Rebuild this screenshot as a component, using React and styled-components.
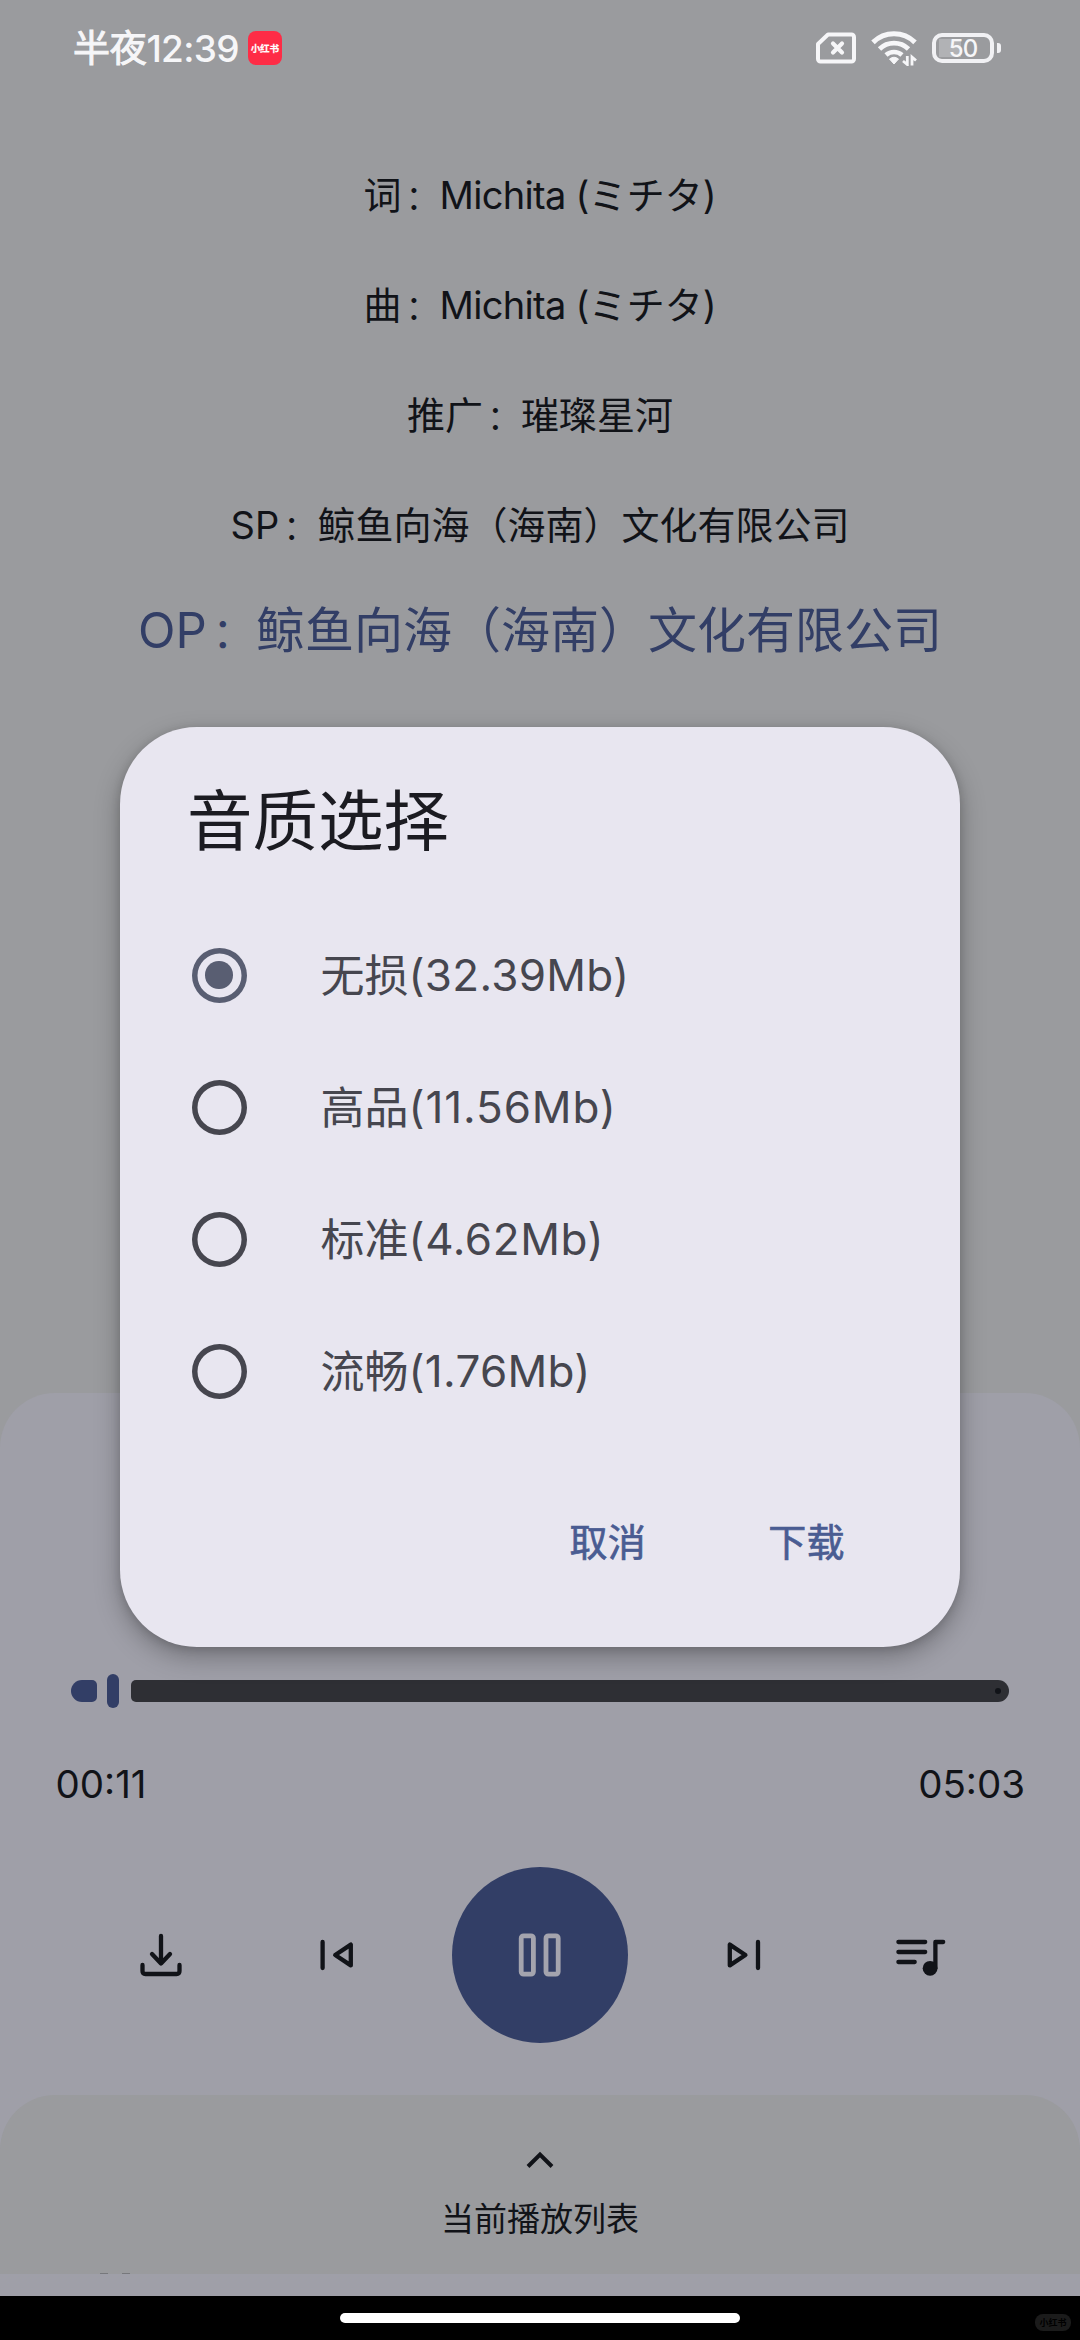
import React, { useState } from 'react';
import styled, { createGlobalStyle } from 'styled-components';

const GlobalStyle = createGlobalStyle`
  * {
    box-sizing: border-box;
  }

  body {
    margin: 0;
    background-color: #9a9b9e;
    font-family: Inter, 'Noto Sans CJK SC', sans-serif;
  }

  button {
    padding: 0;
    border: none;
    background: none;
    font: inherit;
    color: inherit;
    cursor: pointer;
  }

  svg {
    display: block;
  }
`;

const Screen = styled.div`
  position: relative;
  display: flex;
  flex-direction: column;
  width: 1080px;
  height: 2340px;
  overflow: hidden;
  background-color: #9a9b9e;
  color: #111318;
`;

const StatusBar = styled.header`
  display: flex;
  justify-content: space-between;
  height: 96px;
  padding: 0 79px 0 73px;
  color: #f6f6f8;
`;

const StatusGroup = styled.div`
  display: flex;
  align-items: center;
  height: 96px;
  gap: ${(props) => props.$gap}px;
`;

const Clock = styled.span`
  padding-top: 1px;
  font-size: 37px;
  font-weight: ${(props) => props.$weight || 500};
  line-height: 48px;
  letter-spacing: ${(props) => props.$spacing || 0}px;
  -webkit-text-stroke: ${(props) => props.$stroke || 0}px currentColor;
`;

const AppBadge = styled.span`
  display: flex;
  align-items: center;
  justify-content: center;
  width: 34px;
  height: 34px;
  margin-left: 9px;
  border-radius: 8px;
  background-color: #fe2c46;
  color: #fff;
  font-size: 9.6px;
  font-weight: 700;
  letter-spacing: -0.2px;
  -webkit-text-stroke: 0.2px currentColor;
`;

const Battery = styled.div`
  display: flex;
  align-items: center;
  gap: 3px;
`;

const BatteryBody = styled.div`
  display: flex;
  align-items: center;
  justify-content: center;
  width: 62px;
  height: 30px;
  border: 4px solid #f1f1f4;
  border-radius: 10px;
  background: linear-gradient(#b1b2b5, #b1b2b5) 3px 2px / 22px 18px no-repeat;
  font-size: 24px;
  font-weight: 500;
  letter-spacing: -1px;
`;

const BatteryTip = styled.div`
  width: 4px;
  height: 10px;
  border-radius: 0 3px 3px 0;
  background-color: #f1f1f4;
`;

const Lyrics = styled.main`
  display: flex;
  flex-direction: column;
  align-items: center;
  height: 1297px;
  padding-top: 44px;
`;

const LyricLine = styled.p`
  margin: 0;
  height: ${(props) => (props.$active ? 102 : 110)}px;
  line-height: ${(props) => (props.$active ? 102 : 110)}px;
  font-size: ${(props) => (props.$active ? 49 : 38)}px;
  color: ${(props) => (props.$active ? '#323e66' : '#111318')};
  white-space: pre;
`;

const Colon = styled.span`
  margin: 0 0.04em 0 0.13em;
  font-size: 0.86em;
`;

const Latin = styled.span`
  letter-spacing: ${(props) => props.$spacing || 0}px;
`;

const Player = styled.section`
  flex: 1;
  display: flex;
  flex-direction: column;
  border-radius: 55px 55px 0 0;
  background-color: #9f9fa8;
`;

const Seek = styled.div`
  display: flex;
  align-items: center;
  height: 34px;
  margin: 281px 71px 0;
`;

const SeekPlayed = styled.div`
  width: 26px;
  height: 22px;
  border-radius: 11px 5px 5px 11px;
  background-color: #323e66;
`;

const SeekThumb = styled.div`
  width: 12px;
  height: 34px;
  margin: 0 11.5px 0 10px;
  border-radius: 6px;
  background-color: #323e66;
`;

const SeekRest = styled.div`
  flex: 1;
  display: flex;
  align-items: center;
  justify-content: flex-end;
  height: 22px;
  padding-right: 8px;
  border-radius: 5px 11px 11px 5px;
  background-color: #2e2f34;
`;

const SeekEnd = styled.div`
  width: 6px;
  height: 6px;
  border-radius: 50%;
  background-color: #111318;
`;

const Times = styled.div`
  display: flex;
  justify-content: space-between;
  height: 48px;
  margin-top: 52px;
  padding: 0 55px 0 55.5px;
  font-size: 38.5px;
  line-height: 48px;
`;

const Controls = styled.div`
  display: flex;
  align-items: center;
  justify-content: center;
  gap: 82px;
  height: 176px;
  margin-top: 59px;
`;

const ControlPair = styled.div`
  display: flex;
  gap: 110px;
`;

const IconButton = styled.button`
  width: 66px;
  height: 66px;
`;

const PlayButton = styled.button`
  display: flex;
  align-items: center;
  justify-content: center;
  width: 176px;
  height: 176px;
  border-radius: 50%;
  background-color: #323e66;
  color: #a4a4ae;
`;

const Playlist = styled.div`
  display: flex;
  flex-direction: column;
  align-items: center;
  height: 179px;
  margin-top: 52px;
  padding-top: 54px;
  border-radius: 55px 55px 0 0;
  background-color: #9a9b9e;
`;

const PlaylistLabel = styled.span`
  margin-top: 22px;
  font-size: 33px;
  line-height: 48px;
`;

const Peek = styled.div`
  display: flex;
  gap: 14px;
  width: 100%;
  height: 1px;
  margin-top: auto;
  padding-left: 100px;

  span {
    width: 8px;
    background-color: #77787c;
  }
`;

const NavBar = styled.footer`
  display: grid;
  grid-template-columns: 1fr 400px 1fr;
  height: 44px;
  background-color: #000;
`;

const HomePill = styled.div`
  grid-column: 2;
  height: 10px;
  margin-top: 17px;
  border-radius: 5px;
  background-color: #fff;
`;

const Watermark = styled.span`
  justify-self: end;
  width: 36px;
  height: 17px;
  margin: 18px 9px 0 0;
  border-radius: 8px;
  background-color: #1b1b1b;
  color: #000;
  font-size: 9px;
  font-weight: 700;
  line-height: 17px;
  text-align: center;
`;

const Overlay = styled.div`
  position: absolute;
  inset: 34px 0 0;
  display: flex;
  align-items: center;
  justify-content: center;
`;

const Dialog = styled.div`
  width: 840px;
  height: 920px;
  padding: 51px 70px 0 66px;
  border-radius: 77px;
  background-color: #e8e6f0;
  box-shadow: 0 10px 26px rgba(0, 0, 0, 0.28), 0 2px 10px rgba(0, 0, 0, 0.14);
`;

const DialogTitle = styled.h1`
  margin: 0 0 59px 1px;
  font-size: 65.5px;
  font-weight: 400;
  line-height: 88px;
  color: #1b1b21;
`;

const Options = styled.div`
  display: flex;
  flex-direction: column;
`;

const Option = styled.label`
  display: flex;
  align-items: center;
  height: 100px;
  margin-bottom: 32px;
  font-size: 44px;
  color: #46464f;
  cursor: pointer;

  input {
    display: none;
  }
`;

const OptionName = styled.span`
  padding-bottom: 5px;
`;

const Radio = styled.span`
  display: flex;
  align-items: center;
  justify-content: center;
  width: 55px;
  height: 55px;
  margin: 0 74px 0 5.5px;
  border-radius: 50%;
  box-shadow: inset 0 0 0 5.5px ${(props) => (props.$checked ? '#595e72' : '#46464f')};

  &::after {
    content: '';
    width: 27.5px;
    height: 27.5px;
    border-radius: 50%;
    background-color: ${(props) => (props.$checked ? '#595e72' : 'transparent')};
  }
`;

const Actions = styled.div`
  display: flex;
  justify-content: flex-end;
  gap: 122px;
  margin-top: 56px;
  padding-right: 45px;
`;

const ActionButton = styled.button`
  height: 60px;
  color: #4a5c92;
  font-size: 38px;
  letter-spacing: 0.4px;
  -webkit-text-stroke: 0.7px currentColor;
`;

const lyrics = [
  { role: '词', name: 'Michita (', kana: 'ミチタ' },
  { role: '曲', name: 'Michita (', kana: 'ミチタ' },
  { role: '推广', company: '璀璨星河' },
  { role: 'SP', company: '鲸鱼向海（海南）文化有限公司' },
  { role: 'OP', company: '鲸鱼向海（海南）文化有限公司', active: true },
];

const qualities = [
  { name: '无损', size: '(32.39Mb)', spacing: 0.3 },
  { name: '高品', size: '(11.56Mb)', spacing: 0.9 },
  { name: '标准', size: '(4.62Mb)', spacing: 0.6 },
  { name: '流畅', size: '(1.76Mb)', spacing: 0.3 },
];

const NoSimIcon = () => (
  <svg width="40" height="32" viewBox="0 0 40 32" fill="none" stroke="#f6f6f8" strokeLinecap="round" strokeLinejoin="round">
    <path d="M12 2.5H35.5A2.5 2.5 0 0 1 38 5V27A2.5 2.5 0 0 1 35.5 29.5H4.5A2.5 2.5 0 0 1 2 27V12Z" strokeWidth="4" />
    <path d="M17 11.5L26 20.5M26 11.5L17 20.5" strokeWidth="4.2" />
  </svg>
);

const WifiIcon = () => (
  <svg width="46" height="36" viewBox="0 0 46 36" fill="none" stroke="#f6f6f8">
    <path d="M2 12.4A30 30 0 0 1 44 12.4" strokeWidth="5" />
    <path d="M8.5 19A21 21 0 0 1 37.5 19" strokeWidth="4.8" />
    <path d="M15 25A12 12 0 0 1 31 25" strokeWidth="4.6" />
    <path d="M18.5 29Q23 25.5 27.5 29L23 34Z" fill="#f6f6f8" strokeWidth="1" strokeLinejoin="round" />
    <path d="M36.3 26V34.5L32 31M41 35.5V27L45 30.5" strokeWidth="2.8" />
  </svg>
);

const DownloadIcon = () => (
  <svg width="66" height="66" viewBox="0 0 66 66" fill="none" stroke="currentColor" strokeWidth="4.3" strokeLinecap="round" strokeLinejoin="round">
    <path d="M33 14V41M24 32L33 41.5L42 32M14.5 43V49Q14.5 52 17.5 52H48.5Q51.5 52 51.5 49V43" />
  </svg>
);

const PreviousIcon = () => (
  <svg width="66" height="66" viewBox="0 0 66 66" fill="none" stroke="currentColor" strokeWidth="4.3" strokeLinecap="round" strokeLinejoin="round">
    <path d="M18.6 20V46M46.8 22.6V43.4L31.2 33Z" />
  </svg>
);

const PauseIcon = () => (
  <svg width="44" height="44" viewBox="0 0 44 44" fill="none" stroke="currentColor" strokeWidth="4.8">
    <rect x="3.2" y="2.8" width="12.2" height="38.4" rx="2.4" />
    <rect x="28" y="2.8" width="12.2" height="38.4" rx="2.4" />
  </svg>
);

const NextIcon = () => (
  <svg width="66" height="66" viewBox="0 0 66 66" fill="none" stroke="currentColor" strokeWidth="4.3" strokeLinecap="round" strokeLinejoin="round">
    <path d="M48 20V46M19.8 22.6V43.4L35.4 33Z" />
  </svg>
);

const QueueIcon = () => (
  <svg width="66" height="66" viewBox="0 0 66 66" fill="none" stroke="currentColor" strokeWidth="4.3" strokeLinecap="round" strokeLinejoin="round">
    <path d="M12.4 20H39.2M12.4 30H39.2M12.4 40H28.7M49.4 46V20H57.2" />
    <circle cx="44.1" cy="46.3" r="7.4" fill="currentColor" stroke="none" />
  </svg>
);

const ChevronIcon = () => (
  <svg width="66" height="24" viewBox="0 0 66 24" fill="none" stroke="currentColor" strokeWidth="4">
    <path d="M21 17.5L33 5.5L45 17.5" />
  </svg>
);

const App = () => {
  const [quality, setQuality] = useState('无损');

  return (
    <>
      <GlobalStyle />
      <Screen>
        <StatusBar>
          <StatusGroup $gap={0}>
            <Clock $weight={400} $stroke={1} $spacing={-0.3}>半夜</Clock>
            <Clock $spacing={-0.7}>12:39</Clock>
            <AppBadge>小红书</AppBadge>
          </StatusGroup>
          <StatusGroup $gap={15}>
            <NoSimIcon />
            <WifiIcon />
            <Battery>
              <BatteryBody>50</BatteryBody>
              <BatteryTip />
            </Battery>
          </StatusGroup>
        </StatusBar>

        <Lyrics>
          {lyrics.map((line, index) => (
            <LyricLine key={index} $active={line.active}>
              {line.role}
              <Colon>：</Colon>
              {line.company}
              {line.name && <Latin $spacing={-0.7}>{line.name}</Latin>}
              {line.kana}
              {line.name && ')'}
            </LyricLine>
          ))}
        </Lyrics>

        <Player>
          <Seek>
            <SeekPlayed />
            <SeekThumb />
            <SeekRest>
              <SeekEnd />
            </SeekRest>
          </Seek>
          <Times>
            <span>00:11</span>
            <span>05:03</span>
          </Times>
          <Controls>
            <ControlPair>
              <IconButton><DownloadIcon /></IconButton>
              <IconButton><PreviousIcon /></IconButton>
            </ControlPair>
            <PlayButton><PauseIcon /></PlayButton>
            <ControlPair>
              <IconButton><NextIcon /></IconButton>
              <IconButton><QueueIcon /></IconButton>
            </ControlPair>
          </Controls>
          <Playlist>
            <ChevronIcon />
            <PlaylistLabel>当前播放列表</PlaylistLabel>
            <Peek>
              <span />
              <span />
            </Peek>
          </Playlist>
        </Player>

        <NavBar>
          <HomePill />
          <Watermark>小红书</Watermark>
        </NavBar>

        <Overlay>
          <Dialog role="dialog">
            <DialogTitle>音质选择</DialogTitle>
            <Options>
              {qualities.map((item) => (
                <Option key={item.name}>
                  <input
                    type="radio"
                    name="quality"
                    checked={quality === item.name}
                    onChange={() => setQuality(item.name)}
                  />
                  <Radio $checked={quality === item.name} />
                  <OptionName>{item.name}</OptionName>
                  <Latin $spacing={item.spacing}>{item.size}</Latin>
                </Option>
              ))}
            </Options>
            <Actions>
              <ActionButton>取消</ActionButton>
              <ActionButton>下载</ActionButton>
            </Actions>
          </Dialog>
        </Overlay>
      </Screen>
    </>
  );
};

export default App;
